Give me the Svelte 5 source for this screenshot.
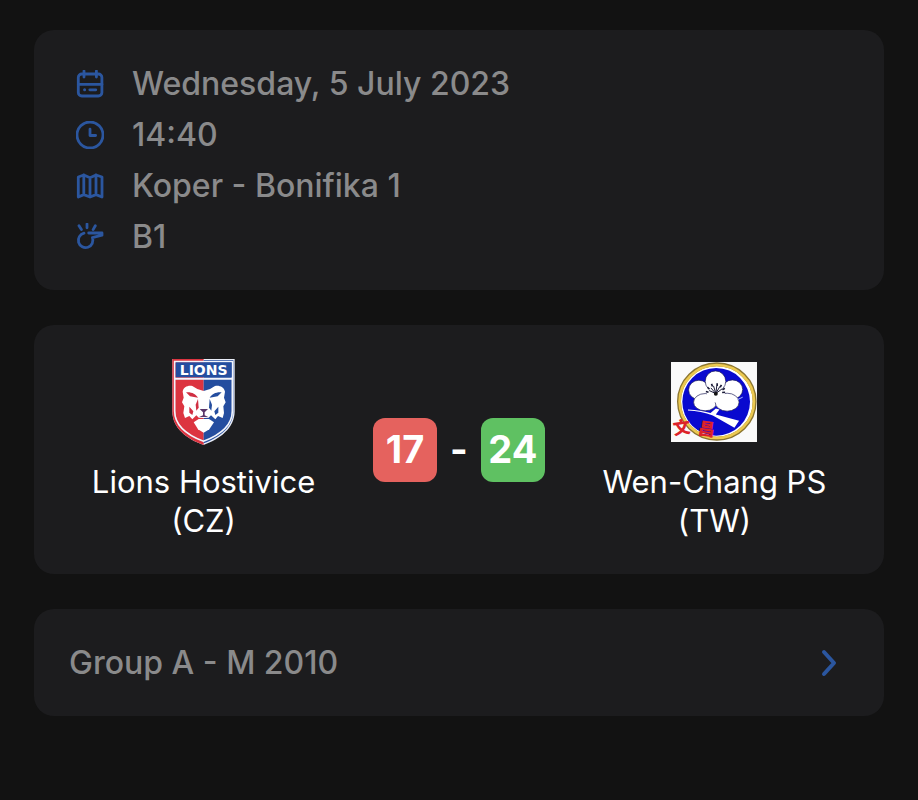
<script lang="ts">
  const match = {
    date: 'Wednesday, 5 July 2023',
    time: '14:40',
    venue: 'Koper - Bonifika 1',
    referee: 'B1',
    group: 'Group A - M 2010'
  };

  const home = { name: 'Lions Hostivice (CZ)', score: 17 };
  const away = { name: 'Wen-Chang PS (TW)', score: 24 };
</script>

<main class="page">
  <section class="card details">
    <div class="row">
      <svg class="icon" viewBox="0 0 28 28" aria-hidden="true">
        <rect x="2.3" y="4" width="23.6" height="22" rx="3.5" />
        <path d="M2.3 14.3H26M8 1v6M20.4 1v6M13.8 19.8h6" />
        <circle class="dot" cx="8.6" cy="19.8" r="1.5" />
      </svg>
      <span>{match.date}</span>
    </div>
    <div class="row">
      <svg class="icon" viewBox="0 0 28 28" aria-hidden="true">
        <circle cx="14" cy="14" r="13" />
        <path d="M14 8.2v6.3h5.6" />
      </svg>
      <span>{match.time}</span>
    </div>
    <div class="row">
      <svg class="icon" viewBox="0 0 28 28" aria-hidden="true">
        <path d="M2.3 5l5.5-2 6.2 2.8L20 3l6 2v20l-6-2.4-6 2.4-6.2-2.4L2.3 25zM7.8 3v19.6M14 5.8V25M20 3v19.6" />
      </svg>
      <span>{match.venue}</span>
    </div>
    <div class="row">
      <svg class="icon" viewBox="0 0 28 28" aria-hidden="true">
        <path d="M12.7 10H26v2.2l-9.6 2.4A7.3 7.3 0 1 1 8 10.2" />
        <path d="M3 2.8l2.4 3.8M11 1v3.8M19.3 2.8l-2.2 3.8" />
      </svg>
      <span>{match.referee}</span>
    </div>
  </section>

  <section class="card result">
    <div class="team">
      <div class="logo">
        <svg width="63" height="86" viewBox="36 28 189 258" role="img" aria-label="Lions">
          <path fill="#e9edf8" d="M37 28H224V184C224 237 178 268 130.500 286C82 268 37 237 37 184z" />
          <path fill="#dc3440" d="M37 28H131V286C82 268 37 237 37 184z" />
          <path fill="#244d9f" d="M131 31H220V184C220 233 178 263 131 281z" />
          <path fill="none" stroke="#f2f4fb" stroke-width="5" d="M44 36H217V184C217 230 175 258 130.500 275C86 258 44 230 44 184z" />
          <rect x="47" y="38" width="168" height="45" fill="#244d9f" />
          <path d="M44 87H217" stroke="#f2f4fb" stroke-width="6" />
          <text class="crest" x="131" y="76" text-anchor="middle">LIONS</text>
          <path fill="#fff" d="M68 126C70 112 84 106 97 109L112 118 131 124 150 118 165 109C178 106 192 112 195 126L192 144 197 158 190 170 192 190 188 205 174 199 166 209 153 197 145 205H117L109 197 97 209 88 199 75 205 70 190 73 170 66 158 71 144z" />
          <path fill="#fff" d="M101 218l15-10h31l15 10-14 21-17 10-17-10z" />
          <path fill="#d02f42" d="M78 128c16-2 29 5 36 16l-24-4zM88 171l12 14-3 11-9-7z" />
          <path fill="#244d9f" d="M185 128c-16-2-29 5-36 16l24-4zM175 171l-12 14 3 11 9-7z" />
          <path fill="#d02f42" d="M114 148l2 26-7 9-2-18z" />
          <path fill="#244d9f" d="M149 148l-2 26 7 9 2-18z" />
          <path fill="#5a3669" d="M119 178h25l-10 10v9l12 6-15-1-15 1 13-6v-9z" />
        </svg>
      </div>
      <span class="name">{home.name}</span>
    </div>

    <div class="score">
      <span class="badge lost">{home.score}</span>
      <span>-</span>
      <span class="badge won">{away.score}</span>
    </div>

    <div class="team">
      <div class="logo">
        <svg width="86" height="80" viewBox="33 37 259 241" role="img" aria-label="Wen-Chang">
          <rect x="33" y="37" width="259" height="241" fill="#fafafa" />
          <ellipse cx="171" cy="156" rx="114" ry="112" fill="#fff" stroke="#8c7630" stroke-width="12" />
          <ellipse cx="171" cy="156" rx="112" ry="110" fill="none" stroke="#ecc950" stroke-width="8" />
          <ellipse cx="169" cy="157" rx="102" ry="102" fill="#0909cf" />
          <g fill="#fff" stroke="#171751" stroke-width="2">
            <ellipse cx="117" cy="121" rx="31" ry="29" />
            <ellipse cx="218" cy="120" rx="31" ry="29" />
            <circle cx="167" cy="95" r="31" />
            <ellipse cx="136" cy="158" rx="35" ry="26" />
            <ellipse cx="202" cy="158" rx="36" ry="27" />
          </g>
          <circle cx="168" cy="132" r="27" fill="#fff" />
          <g stroke="#1b1b38" stroke-width="3">
            <path d="M168 132l-20-9M168 132l-15-17M168 132l-7-23M168 132l3-24M168 132l12-21M168 132l20-15" />
            <path d="M138 126l8 2M143 113l6 6M155 103l3 8M172 101v8M185 106l-4 7M195 116l-7 5M196 128l-9 1" stroke-width="5" />
          </g>
          <circle cx="168" cy="133" r="6" fill="#111" />
          <path fill="#fff" d="M84 180c27 1 47 5 68 11l16-14 11 3-11 15 70 19-14 21-65-37c-23-9-49-14-75-15z" />
          <path d="M232 151l17-8" stroke="#aab9ff" stroke-width="3" />
          <g class="seal">
            <text x="42" y="257" transform="rotate(-8 42 257)">文</text>
            <text x="112" y="254" transform="rotate(8 112 254)">昌</text>
          </g>
        </svg>
      </div>
      <span class="name">{away.name}</span>
    </div>
  </section>

  <a class="card group" href="#group">
    <span>{match.group}</span>
    <svg class="chevron" viewBox="0 0 16 28" aria-hidden="true">
      <path d="M3 3l10 11L3 25" />
    </svg>
  </a>
</main>

<style>
  :global(body) {
    margin: 0;
    background: #121212;
  }

  .page {
    display: flex;
    flex-direction: column;
    gap: 35px;
    padding: 30px 34px;
    font-family: Inter, 'Liberation Sans', sans-serif;
    font-size: 32px;
    line-height: 39px;
    color: #8a8a8b;
  }

  .card {
    background: #1c1c1e;
    border-radius: 20px;
  }

  .details {
    padding: 28px 42px;
    font-weight: 500;
  }

  .row {
    display: flex;
    align-items: center;
    gap: 28px;
    height: 51px;
  }

  .icon {
    flex: none;
    width: 28px;
    height: 28px;
    fill: none;
    stroke: #2b569f;
    stroke-width: 2.8;
    stroke-linecap: round;
    stroke-linejoin: round;
  }

  .icon .dot { fill: #2b569f; stroke: none; }

  .result {
    display: grid;
    grid-template-columns: 1fr auto 1fr;
    align-items: center;
    gap: 34px;
    padding: 34px;
    color: #fff;
  }

  .team {
    display: flex;
    flex-direction: column;
    align-items: center;
    gap: 17px;
    text-align: center;
  }

  .name { font-size: 31px; }

  .logo {
    display: flex;
    align-items: center;
    height: 86px;
  }

  .crest {
    font-family: 'DejaVu Sans', sans-serif;
    font-size: 42px;
    font-weight: 700;
    fill: #fff;
  }

  .seal {
    font-family: 'Noto Sans CJK TC', sans-serif;
    font-size: 52px;
    font-weight: 900;
    fill: #dc2229;
  }

  .score {
    display: flex;
    align-items: center;
    gap: 13px;
    font-size: 38px;
    font-weight: 700;
  }

  .badge {
    display: flex;
    align-items: center;
    justify-content: center;
    width: 64px;
    height: 64px;
    border-radius: 12px;
  }

  .lost { background: #e5625e; }
  .won { background: #5fc162; }

  .group {
    display: flex;
    align-items: center;
    justify-content: space-between;
    padding: 34px 47px 34px 35px;
    font-weight: 500;
    color: #8a8a8b;
    text-decoration: none;
  }

  .chevron {
    width: 16px;
    height: 28px;
    fill: none;
    stroke: #2b569f;
    stroke-width: 4;
    stroke-linecap: round;
    stroke-linejoin: round;
  }
</style>
